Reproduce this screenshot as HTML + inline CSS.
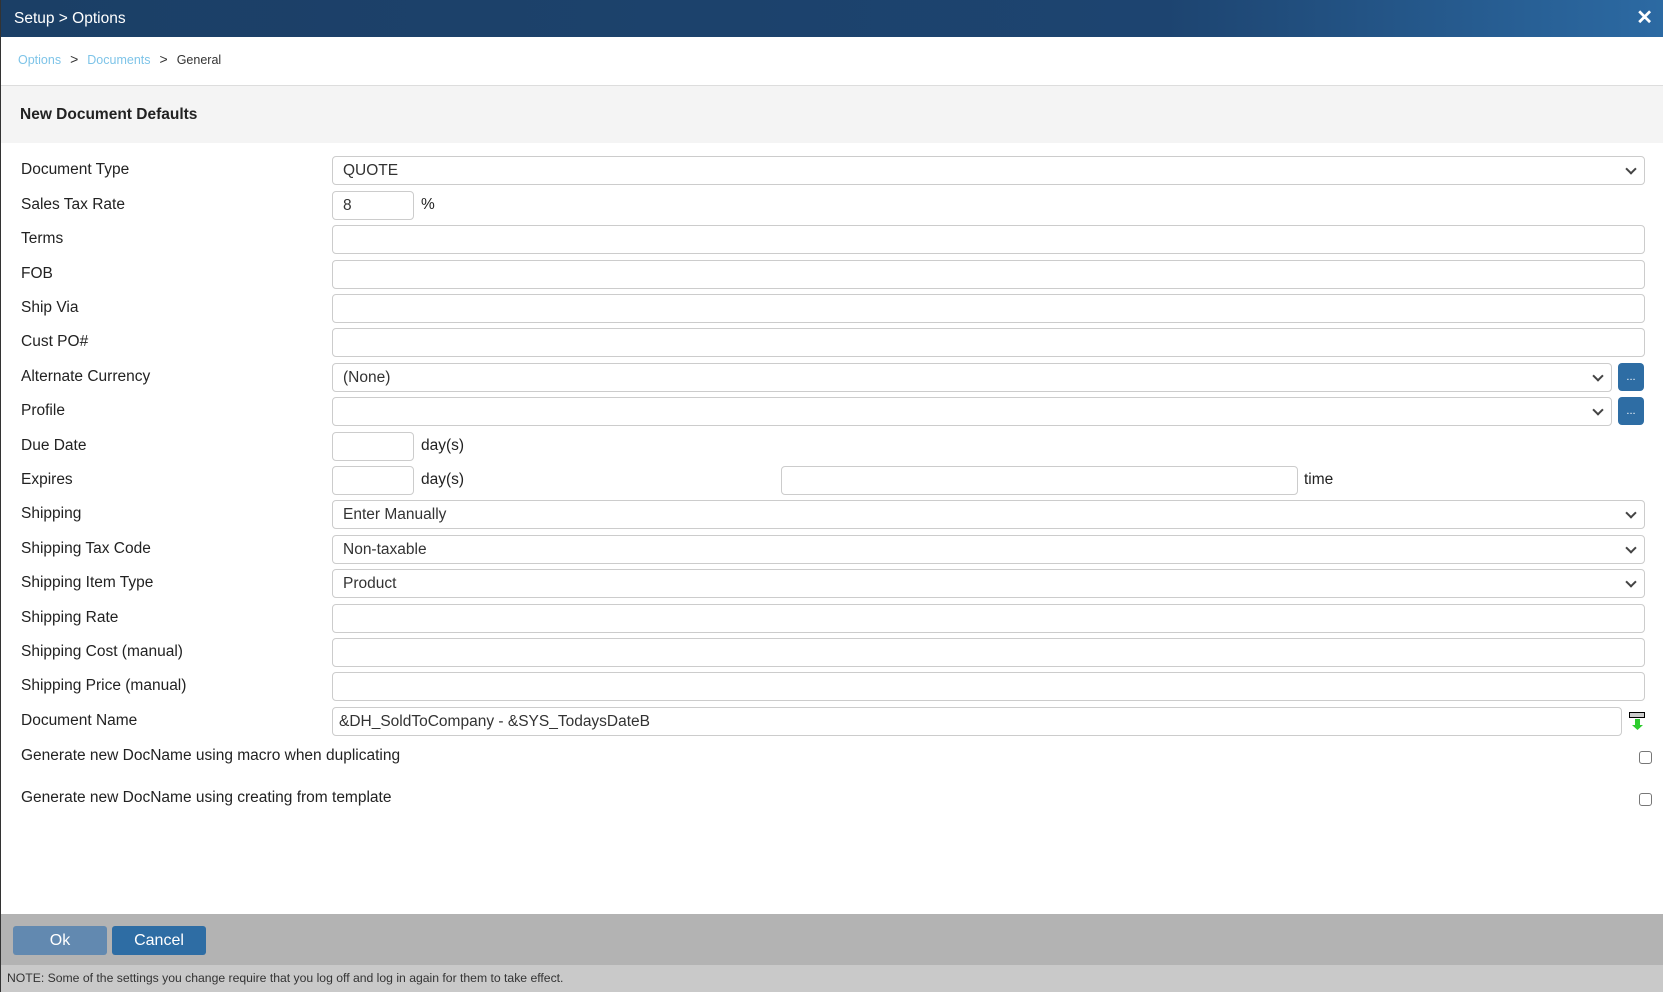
<!DOCTYPE html>
<html><head><meta charset="utf-8"><style>
*{box-sizing:border-box;margin:0;padding:0}
body{width:1663px;height:992px;overflow:hidden;background:#fff;font-family:"Liberation Sans",Arial,sans-serif;position:relative;border-left:1px solid #333}
.a{position:absolute}
.hdr{left:0;top:0;width:1663px;height:37px;background:linear-gradient(90deg,#1b3f66 0%,#1d4470 70%,#2c6aa3 100%);color:#fff;font-size:15.5px;line-height:37px;padding-left:13px}
.x{right:10px;top:0;color:#fff;font-size:20px;font-weight:bold;line-height:37px}
.bc{left:17px;top:51px;font-size:12.5px;color:#333}
.bc .l{color:#7ec4e8}
.bc .s{margin:0 9px;font-size:14px}
.sec{left:0;top:85px;width:1663px;height:58px;background:#f4f4f4;border-top:1px solid #ddd;font-weight:bold;font-size:15.5px;color:#222;line-height:58px;padding-left:19px}
.lb{left:20px;font-size:15.5px;color:#222;line-height:20px}
.in{height:29px;border:1px solid #ccc;border-radius:4px;background:#fff;font-size:15.5px;color:#333;line-height:27px;padding-left:10px}
.sel::after{content:"";position:absolute;right:9px;top:8px;width:6px;height:6px;border-right:2px solid #444;border-bottom:2px solid #444;transform:rotate(45deg)}
.btn{width:26px;height:28px;background:#2e6da4;border-radius:4px;color:#fff;font-size:11px;text-align:center;line-height:28px}
.t{font-size:15.5px;color:#222;line-height:20px}
.cb{width:13px;height:13px;border:1px solid #777;border-radius:3px;background:#fff}
.ft{left:0;top:914px;width:1663px;height:51px;background:#b3b3b3}
.note{left:0;top:965px;width:1663px;height:27px;background:#c9c9c9;font-size:12.2px;color:#333;line-height:27px;padding-left:6px}
.b{top:926px;height:29px;border-radius:3px;color:#fff;font-size:16px;text-align:center;line-height:29px}
.f{position:absolute;left:0;top:1.5px;width:1663px;height:900px}
</style></head><body>
<div class="a hdr">Setup &gt; Options</div>
<div class="a x">✕</div>
<div class="a bc"><span class="l">Options</span><span class="s">&gt;</span><span class="l">Documents</span><span class="s">&gt;</span>General</div>
<div class="a sec">New Document Defaults</div>
<div class="f">
<div class="a lb" style="top:158px">Document Type</div>
<div class="a in sel" style="left:331px;top:154px;width:1313px">QUOTE</div>
<div class="a lb" style="top:193px">Sales Tax Rate</div>
<div class="a in" style="left:331px;top:189px;width:82px">8</div>
<div class="a t" style="left:420px;top:193px">%</div>
<div class="a lb" style="top:227px">Terms</div>
<div class="a in" style="left:331px;top:223px;width:1313px"></div>
<div class="a lb" style="top:262px">FOB</div>
<div class="a in" style="left:331px;top:258px;width:1313px"></div>
<div class="a lb" style="top:296px">Ship Via</div>
<div class="a in" style="left:331px;top:292px;width:1313px"></div>
<div class="a lb" style="top:330px">Cust PO#</div>
<div class="a in" style="left:331px;top:326px;width:1313px"></div>
<div class="a lb" style="top:365px">Alternate Currency</div>
<div class="a in sel" style="left:331px;top:361px;width:1280px">(None)</div>
<div class="a btn" style="left:1617px;top:361px">...</div>
<div class="a lb" style="top:399px">Profile</div>
<div class="a in sel" style="left:331px;top:395px;width:1280px"></div>
<div class="a btn" style="left:1617px;top:395px">...</div>
<div class="a lb" style="top:434px">Due Date</div>
<div class="a in" style="left:331px;top:430px;width:82px"></div>
<div class="a t" style="left:420px;top:434px">day(s)</div>
<div class="a lb" style="top:468px">Expires</div>
<div class="a in" style="left:331px;top:464px;width:82px"></div>
<div class="a t" style="left:420px;top:468px">day(s)</div>
<div class="a in" style="left:780px;top:464px;width:517px"></div>
<div class="a t" style="left:1303px;top:468px">time</div>
<div class="a lb" style="top:502px">Shipping</div>
<div class="a in sel" style="left:331px;top:498px;width:1313px">Enter Manually</div>
<div class="a lb" style="top:537px">Shipping Tax Code</div>
<div class="a in sel" style="left:331px;top:533px;width:1313px">Non-taxable</div>
<div class="a lb" style="top:571px">Shipping Item Type</div>
<div class="a in sel" style="left:331px;top:567px;width:1313px">Product</div>
<div class="a lb" style="top:606px">Shipping Rate</div>
<div class="a in" style="left:331px;top:602px;width:1313px"></div>
<div class="a lb" style="top:640px">Shipping Cost (manual)</div>
<div class="a in" style="left:331px;top:636px;width:1313px"></div>
<div class="a lb" style="top:674px">Shipping Price (manual)</div>
<div class="a in" style="left:331px;top:670px;width:1313px"></div>
<div class="a lb" style="top:709px">Document Name</div>
<div class="a in" style="left:331px;top:705px;width:1290px;padding-left:6px">&amp;DH_SoldToCompany - &amp;SYS_TodaysDateB</div>
<svg class="a" style="left:1628px;top:710px" width="17" height="20"><rect x="0.5" y="0.5" width="15" height="5" fill="#ccc" stroke="#000"/><rect x="6" y="7" width="5" height="6" fill="#2ecc2e"/><path d="M3 13h11l-5.5 5z" fill="#2ecc2e"/></svg>
<div class="a lb" style="top:744px">Generate new DocName using macro when duplicating</div>
<div class="a cb" style="left:1638px;top:749px"></div>
<div class="a lb" style="top:786px">Generate new DocName using creating from template</div>
<div class="a cb" style="left:1638px;top:791px"></div>
</div>
<div class="a ft"></div>
<div class="a b" style="left:12px;width:94px;background:#6289b0">Ok</div>
<div class="a b" style="left:111px;width:94px;background:#2e6da4">Cancel</div>
<div class="a note">NOTE: Some of the settings you change require that you log off and log in again for them to take effect.</div>
</body></html>
